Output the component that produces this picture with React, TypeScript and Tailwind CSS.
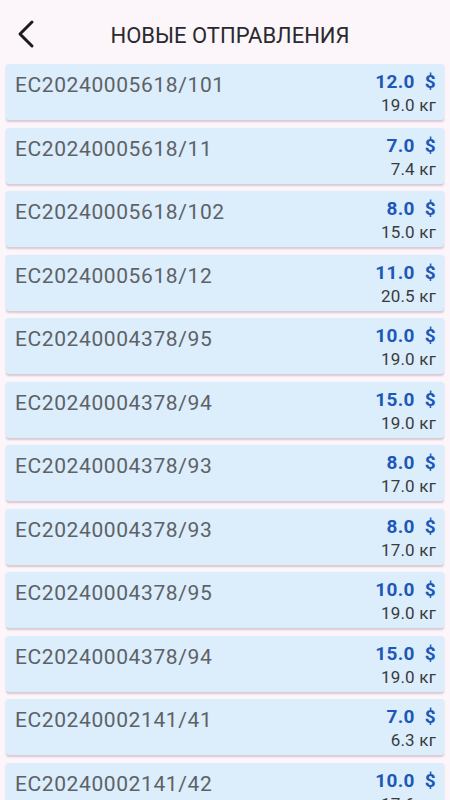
import React from "react";

const items = [
  { code: "EC20240005618/101", price: "12.0", weight: "19.0" },
  { code: "EC20240005618/11", price: "7.0", weight: "7.4" },
  { code: "EC20240005618/102", price: "8.0", weight: "15.0" },
  { code: "EC20240005618/12", price: "11.0", weight: "20.5" },
  { code: "EC20240004378/95", price: "10.0", weight: "19.0" },
  { code: "EC20240004378/94", price: "15.0", weight: "19.0" },
  { code: "EC20240004378/93", price: "8.0", weight: "17.0" },
  { code: "EC20240004378/93", price: "8.0", weight: "17.0" },
  { code: "EC20240004378/95", price: "10.0", weight: "19.0" },
  { code: "EC20240004378/94", price: "15.0", weight: "19.0" },
  { code: "EC20240002141/41", price: "7.0", weight: "6.3" },
  { code: "EC20240002141/42", price: "10.0", weight: "17.6" },
];

const App = () => {
  return (
    <div className="w-[450px] h-[800px] overflow-hidden bg-[#fcf6fb] font-['Roboto',sans-serif]">
      <div className="relative h-[64px] flex items-center justify-center">
        <button className="absolute left-[15px] top-[18px] w-[22px] h-[31px] flex items-center justify-center">
          <svg width="20" height="30" viewBox="0 0 20 30" fill="none">
            <path d="M16 3 L4 15 L16 27" stroke="#1c1b1f" strokeWidth="3" strokeLinecap="round" strokeLinejoin="round" />
          </svg>
        </button>
        <h1 className="pl-[10px] pt-[7px] text-[22px] text-[#2a2a2e]">НОВЫЕ ОТПРАВЛЕНИЯ</h1>
      </div>
      <div className="flex flex-col gap-[7.5px] px-[6px]">
        {items.map((item, i) => (
          <div
            key={i}
            className="h-[56px] bg-[#dcedfc] rounded-[3px] shadow-[0_1.5px_2px_rgba(120,60,90,0.25)] flex justify-between pl-[9px] pr-[8px]"
          >
            <div className="pt-[7px] text-[21px] leading-[28px] text-[#5d6266] tracking-[0.6px]">{item.code}</div>
            <div className="flex flex-col items-end pt-[7px]">
              <div className="text-[19px] leading-[22px] font-bold text-[#1d58b8] tracking-[0.3px]">
                {item.price}&nbsp;&nbsp;$
              </div>
              <div className="text-[17px] leading-[22px] text-[#3a3b3e] tracking-[0.2px] mt-[1px]">{item.weight} кг</div>
            </div>
          </div>
        ))}
      </div>
    </div>
  );
};

export default App;
